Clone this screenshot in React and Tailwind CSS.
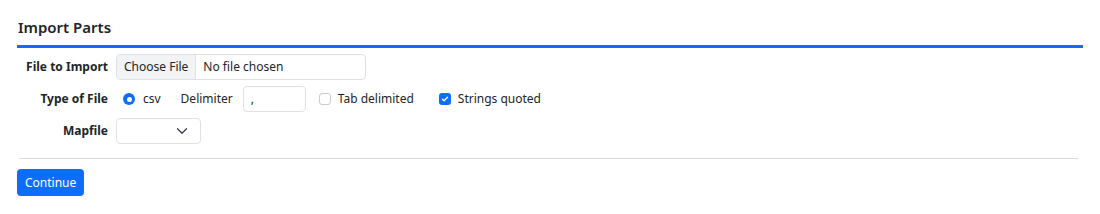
import React from "react";

const ChevronDown = () => (
  <svg width="12" height="12" viewBox="0 0 16 16" fill="none">
    <path d="M2 5l6 6 6-6" stroke="#343a40" strokeWidth="1.6" strokeLinecap="round" strokeLinejoin="round" />
  </svg>
);

const FormRow = ({ label, children }) => (
  <div className="flex items-center h-[26px]">
    <div className="w-[91px] text-right font-bold text-[12px] text-[#212529]">{label}</div>
    <div className="ml-[8px] flex items-center h-full">{children}</div>
  </div>
);

const App = () => {
  return (
    <div className="w-[1100px] h-[214px] bg-white pl-[17px] pr-[17px] pt-[16px]" style={{ fontFamily: "'Noto Sans', sans-serif" }}>
      <div className="border-b-[3px] border-[#0d6efd] pb-[7px]">
        <h2 className="text-[15px] font-semibold text-[#212529] leading-[22px] pl-[1px]">Import Parts</h2>
      </div>

      <div className="flex flex-col gap-[6px] mt-[6px]">
        <FormRow label="File to Import">
          <div className="flex h-[26px] w-[250px] border border-[#dee2e6] rounded-[4px] overflow-hidden text-[12px] text-[#212529]">
            <div className="bg-[#f1f3f5] border-r border-[#dee2e6] px-[7px] flex items-center">Choose File</div>
            <div className="px-[7px] flex items-center">No file chosen</div>
          </div>
        </FormRow>

        <FormRow label="Type of File">
          <div className="flex items-center text-[12px] text-[#212529]">
            <span className="ml-[7px] w-[12px] h-[12px] rounded-full bg-[#0d6efd] flex items-center justify-center">
              <span className="w-[5px] h-[5px] rounded-full bg-white" />
            </span>
            <span className="ml-[8px]">csv</span>
            <span className="ml-[20px]">Delimiter</span>
            <div className="ml-[10px] w-[63px] h-[26px] border border-[#dee2e6] rounded-[4px] flex items-center px-[7px]">,</div>
            <span className="ml-[13px] w-[12px] h-[12px] border border-[#c8ccd0] rounded-[3px] bg-white" />
            <span className="ml-[7px]">Tab delimited</span>
            <span className="ml-[25px] w-[12px] h-[12px] rounded-[3px] bg-[#0d6efd] flex items-center justify-center">
              <svg width="8" height="8" viewBox="0 0 16 16" fill="none">
                <path d="M3 8.5l3.2 3L13 4.5" stroke="white" strokeWidth="2.6" strokeLinecap="round" strokeLinejoin="round" />
              </svg>
            </span>
            <span className="ml-[7px]">Strings quoted</span>
          </div>
        </FormRow>

        <FormRow label="Mapfile">
          <div className="w-[85px] h-[26px] border border-[#dee2e6] rounded-[4px] flex items-center justify-end pr-[12px]">
            <ChevronDown />
          </div>
        </FormRow>
      </div>

      <hr className="mt-[14px] ml-[2px] mr-[5px] border-t border-[#d9dcdf]" />

      <button className="mt-[10px] h-[27px] px-[8px] bg-[#0d6efd] text-white text-[12px] rounded-[4px] leading-none">
        Continue
      </button>
    </div>
  );
};

export default App;
